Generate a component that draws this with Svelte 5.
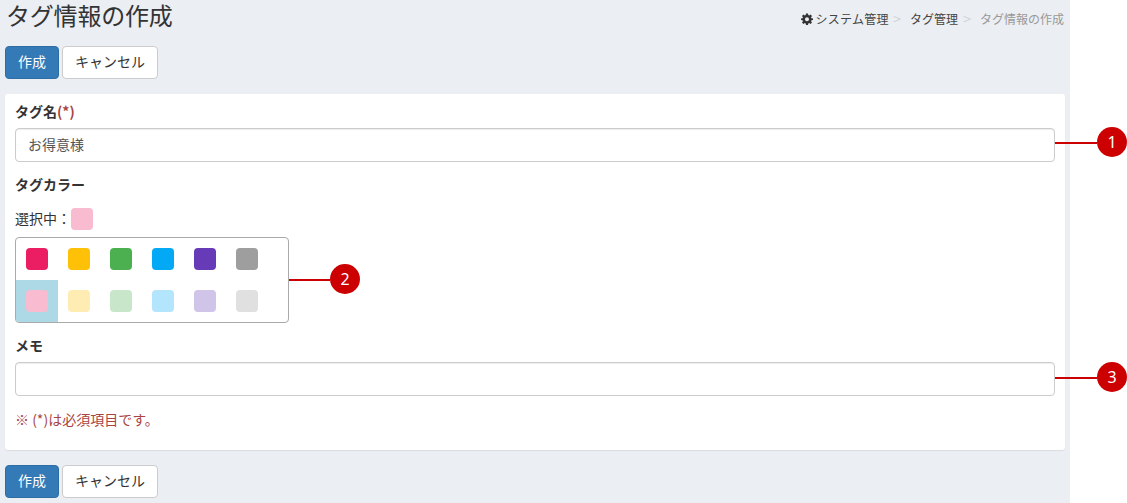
<script>
  const colors = ['#ec1e63', '#ffc107', '#4caf50', '#03a9f4', '#673ab7', '#9e9e9e', '#f8bbd0', '#ffecb3', '#c8e6c9', '#b3e5fc', '#d1c4e9', '#e0e0e0'];
  let selected = 6;
</script>

<div class="page">
  <div class="head">
    <h1>タグ情報の作成</h1>
    <ul class="crumbs">
      <li class="root">
        <svg viewBox="0 0 24 24" width="12" height="12"><path fill="#333" fill-rule="evenodd" d="M10 1h4l.6 3.1 1.9.8L19.2 3 22 5.800l-1.900 2.700.8 1.900L24 11v3l-3.100.6-.8 1.900 1.900 2.700-2.800 2.800-2.700-1.900-1.900.8L14 24h-4l-.6-3.100-1.900-.8-2.700 1.900L2 19.200l1.900-2.700-.8-1.900L0 14v-3l3.100-.6.8-1.900L2 5.800 4.800 3l2.700 1.900 1.900-.8zM12 8.500a4 4 0 1 0 0 8 4 4 0 0 0 0-8z"/></svg>
        システム管理
      </li>
      <li class="sep">&gt;</li>
      <li>タグ管理</li>
      <li class="sep">&gt;</li>
      <li class="now">タグ情報の作成</li>
    </ul>
  </div>

  <div class="actions">
    <button class="primary">作成</button>
    <button>キャンセル</button>
  </div>

  <div class="card">
    <div class="label first">タグ名<span class="req">(*)</span></div>
    <div class="field">
      <input type="text" value="お得意様" />
      <div class="callout wide top"><span class="line"></span><span class="num">1</span></div>
    </div>

    <div class="label color">タグカラー</div>
    <div class="current"><span class="current-text">選択中：</span><span class="swatch" style="background: {colors[selected]}"></span></div>
    <div class="field palette-wrap">
      <div class="palette">
        {#each colors as c, i}
          <div class="cell" class:active={i === selected}>
            <span class="swatch" style="background: {c}"></span>
          </div>
        {/each}
      </div>
      <div class="callout narrow"><span class="line"></span><span class="num">2</span></div>
    </div>

    <div class="label memo">メモ</div>
    <div class="field">
      <input type="text" />
      <div class="callout wide low"><span class="line"></span><span class="num">3</span></div>
    </div>

    <p class="note">※ (*)は必須項目です。</p>
  </div>

  <div class="actions bottom">
    <button class="primary">作成</button>
    <button>キャンセル</button>
  </div>
</div>

<style>
  :global(body) {
    margin: 0;
    background: #fff;
  }

  .page {
    width: 1070px;
    height: 503px;
    box-sizing: border-box;
    background: #ebeef3;
    font-family: "Noto Sans CJK JP", "Liberation Sans", sans-serif;
    font-size: 14px;
    color: #333;
  }

  .head {
    display: flex;
    justify-content: space-between;
    height: 46px;
    padding: 0 6px 0 6px;
  }

  h1 {
    margin: 0;
    font-family: "Liberation Sans", "Noto Sans CJK JP", sans-serif;
    font-size: 24px;
    font-weight: 400;
    line-height: 34px;
    letter-spacing: -0.2px;
  }

  .crumbs {
    display: flex;
    gap: 7px;
    list-style: none;
    margin: 0;
    padding: 10px 0 0;
    font-size: 12px;
    line-height: 17px;
    color: #444;
  }

  .root {
    letter-spacing: 0.3px;
    margin-right: -1px;
  }

  .crumbs svg {
    vertical-align: -1px;
    margin-right: -1px;
  }

  .sep {
    margin: 0 2px 0 -2px;
    font-size: 15px;
    font-weight: 300;
    color: #ccc;
  }

  .now {
    color: #999;
  }

  .actions {
    display: flex;
    gap: 3px;
    padding-left: 5px;
  }

  .actions.bottom {
    margin-top: 15px;
  }

  button {
    height: 33px;
    width: 96px;
    padding: 0 0 3px;
    border: 1px solid #ccc;
    border-radius: 4px;
    background: #fff;
    color: #333;
    font: inherit;
  }

  button.primary {
    width: 54px;
    background: #337ab7;
    border-color: #2e6da4;
    color: #fff;
  }

  .card {
    box-sizing: border-box;
    width: 1060px;
    height: 356px;
    margin: 15px 0 0 5px;
    padding: 0 10px;
    background: #fff;
    border-radius: 3px;
    box-shadow: 0 1px 1px rgba(0, 0, 0, 0.08);
  }

  .label {
    font-weight: 700;
    line-height: 19px;
    color: #333;
  }

  .label.first {
    padding-top: 8px;
    margin-bottom: 7px;
  }

  .label.color {
    margin-top: 13px;
  }

  .label.memo {
    margin-top: 13px;
    margin-bottom: 7px;
  }

  .req {
    color: #a94442;
  }

  .field {
    position: relative;
  }

  input {
    display: block;
    box-sizing: border-box;
    width: 1040px;
    height: 34px;
    padding: 0 12px 3px;
    border: 1px solid #ccc;
    border-radius: 4px;
    background: #fff;
    color: #555;
    font: inherit;
    box-shadow: inset 0 1px 1px rgba(0, 0, 0, 0.075);
    outline: none;
  }

  .current {
    display: flex;
    align-items: center;
    height: 22px;
    margin-top: 14px;
  }

  .current-text {
    margin-bottom: 3px;
  }

  .palette-wrap {
    width: 274px;
    margin-top: 7px;
  }

  .palette {
    display: grid;
    grid-template-columns: repeat(6, 42px);
    grid-auto-rows: 42px;
    box-sizing: border-box;
    width: 274px;
    height: 86px;
    border: 1px solid #aaa;
    border-radius: 4px;
    overflow: hidden;
  }

  .cell {
    display: flex;
    align-items: center;
    justify-content: center;
  }

  .cell.active {
    background: #add8e6;
  }

  .swatch {
    display: block;
    width: 22px;
    height: 22px;
    border-radius: 4px;
  }

  .note {
    margin: 14px 0 0;
    line-height: 19px;
    color: #a94442;
  }

  /* numbered markers that sit over the screenshot */
  .callout {
    position: absolute;
    top: 50%;
    left: 100%;
    display: flex;
    align-items: center;
    transform: translateY(-50%);
  }

  .callout.top {
    margin-top: -2px;
  }

  .callout.low {
    margin-top: -1px;
  }

  .line {
    display: block;
    height: 2px;
    background: #c00;
  }

  .wide .line {
    width: 42px;
  }

  .narrow .line {
    width: 41px;
  }

  .num {
    display: flex;
    align-items: center;
    justify-content: center;
    width: 30px;
    height: 30px;
    margin-top: -2px;
    border-radius: 50%;
    background: #c00;
    color: #fff;
    font-family: "Noto Sans", sans-serif;
    font-size: 16px;
  }
</style>
